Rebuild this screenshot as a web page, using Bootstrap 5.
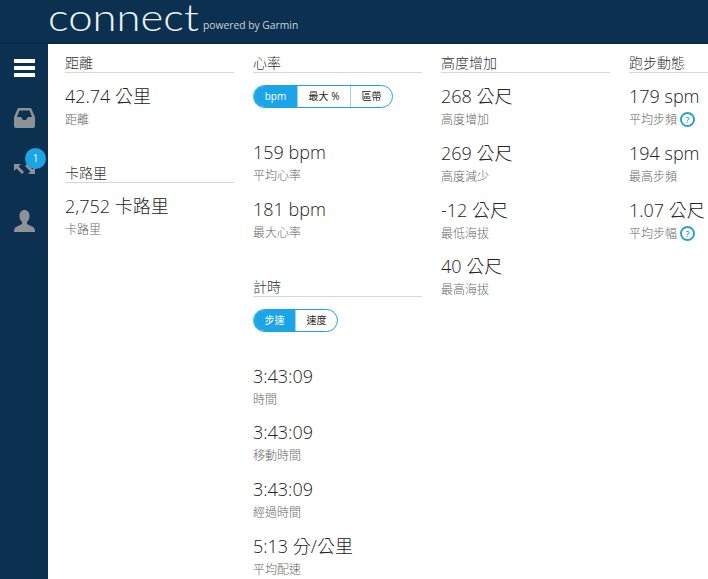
<!DOCTYPE html>
<html lang="zh-Hant">
<head>
  <meta charset="UTF-8">
  <meta name="viewport" content="width=device-width, initial-scale=1">
  <title>Garmin Connect</title>
  <link href="https://cdn.jsdelivr.net/npm/bootstrap@5.3.2/dist/css/bootstrap.min.css" rel="stylesheet">
  <style>
    html, body { height: 100%; overflow: hidden; }
    body { background: #0c3050; font-family: "Open Sans", "Noto Sans CJK TC", sans-serif; color: #222; }
    .top-bar { height: 44px; padding-left: 48px; background: #0c3050; border-bottom: 2px solid #0a2a45; }
    .logo-word { width: 150px; font-family: Lato, "Open Sans", sans-serif; font-weight: 300; font-size: 37px; line-height: 34px; color: #eef5f5; transform: scaleX(1.18); transform-origin: left center; white-space: nowrap; }
    .logo-by { font-size: 10.300px; color: #c9d5dc; margin-left: 5px; margin-top: 18px; line-height: 15px; }
    .shell { height: 535px; }
    .side-rail { width: 48px; flex: none; padding-top: 15px; }
    .rail-item { position: relative; }
    .rail-menu { height: 49px; }
    .rail-inbox { height: 55px; }
    .rail-sync { height: 47px; }
    .rail-item svg { display: block; }
    .rail-badge { position: absolute; left: 25px; top: -15px; width: 21px; height: 21px; border-radius: 50%; background: #1ba5e6; color: #fff; font-size: 10px; line-height: 21px; text-align: center; }
    .page-body { background: #fff; flex: 1; min-width: 0; overflow: hidden; padding: 9px 0 0 17px; gap: 19px; font-weight: 300; }
    .stat-col { width: 169px; flex: none; }
    .sec-title { font-size: 14px; line-height: 19px; height: 19px; border-bottom: 1px solid #d8d8d8; color: #333; box-sizing: content-box; margin: 0; font-weight: 300; }
    .stat-item { height: 56.750px; padding-top: 10px; white-space: nowrap; }
    .stat-val { font-size: 18px; line-height: 26px; color: #222; margin-bottom: 2px; }
    .stat-lab { font-size: 12px; line-height: 18px; color: #666; }
    .pill-group { height: 23px; margin-top: 12px; margin-bottom: 21px; border: 1px solid #1ba5e6; border-radius: 12px; overflow: hidden; font-size: 10px; color: #222; font-weight: 400; }
    .pill-group > div { line-height: 21px; text-align: center; border-left: 1px solid #9fd3ea; }
    .pill-group > .pill-on { background: #1ba5e6; color: #fff; border-left: 0; }
    .pw-43 { width: 43px; }
    .pw-53 { width: 53px; }
    .pw-42 { width: 42px; }
    .pw-41 { width: 41px; }
    .gap-cal { height: 33px; }
    .gap-time { height: 34px; }
    .help-dot { display: inline-block; width: 15px; height: 15px; border: 2px solid #2a9fd0; border-radius: 50%; color: #2a9fd0; font-size: 9px; line-height: 11px; text-align: center; font-weight: 600; margin-left: 3px; vertical-align: 1px; }
  </style>
</head>
<body>
  <div class="top-bar d-flex align-items-start">
    <div class="logo-word">connect</div>
    <div class="logo-by">powered by Garmin</div>
  </div>
  <div class="shell d-flex">
    <div class="side-rail">
      <div class="rail-item rail-menu d-flex justify-content-center">
        <svg width="21" height="18" viewBox="0 0 21 18"><path fill="#fff" d="M0 0h21v4H0zM0 7h21v4H0zM0 14h21v4H0z"/></svg>
      </div>
      <div class="rail-item rail-inbox d-flex justify-content-center">
        <svg width="21" height="20" viewBox="0 0 21 20"><path fill="#8e9296" fill-rule="evenodd" d="M4 0h13l4 9v9a2 2 0 0 1-2 2H2a2 2 0 0 1-2-2V9zM5.500 2.500 3 9h4l2 3h3l2-3h4l-2.500-6.500z"/></svg>
      </div>
      <div class="rail-item rail-sync d-flex justify-content-center">
        <svg width="21" height="12" viewBox="0 0 21 12"><path fill="#8e9296" d="M0 1h7L0 8z"/><path stroke="#8e9296" stroke-width="3" d="M3 4l6 6"/><path fill="#8e9296" d="M21 11h-7l7-7z"/><path stroke="#8e9296" stroke-width="3" d="M18 8l-6-6"/></svg>
        <span class="rail-badge">1</span>
      </div>
      <div class="rail-item d-flex justify-content-center">
        <svg width="21" height="22" viewBox="0 0 21 22"><path fill="#8e9296" d="M10.500 0c3 0 5 2.500 5 6 0 2.500-1 4.500-2.500 6v2l6 3c1.500 1 2 2.500 2 5H0c0-2.500.5-4 2-5l6-3v-2C6.500 10.500 5.500 8.500 5.500 6c0-3.500 2-6 5-6z"/></svg>
      </div>
    </div>
    <div class="page-body d-flex">
      <div class="stat-col">
        <h2 class="sec-title">距離</h2>
        <div class="stat-item"><div class="stat-val">42.74 公里</div><div class="stat-lab">距離</div></div>
        <div class="gap-cal"></div>
        <h2 class="sec-title">卡路里</h2>
        <div class="stat-item"><div class="stat-val">2,752 卡路里</div><div class="stat-lab">卡路里</div></div>
      </div>
      <div class="stat-col">
        <h2 class="sec-title">心率</h2>
        <div class="pill-group d-inline-flex">
          <div class="pill-on pw-43">bpm</div>
          <div class="pw-53">最大 %</div>
          <div class="pw-42">區帶</div>
        </div>
        <div class="stat-item"><div class="stat-val">159 bpm</div><div class="stat-lab">平均心率</div></div>
        <div class="stat-item"><div class="stat-val">181 bpm</div><div class="stat-lab">最大心率</div></div>
        <div class="gap-time"></div>
        <h2 class="sec-title">計時</h2>
        <div class="pill-group d-inline-flex">
          <div class="pill-on pw-41">步速</div>
          <div class="pw-42">速度</div>
        </div>
        <div class="stat-item"><div class="stat-val">3:43:09</div><div class="stat-lab">時間</div></div>
        <div class="stat-item"><div class="stat-val">3:43:09</div><div class="stat-lab">移動時間</div></div>
        <div class="stat-item"><div class="stat-val">3:43:09</div><div class="stat-lab">經過時間</div></div>
        <div class="stat-item"><div class="stat-val">5:13 分/公里</div><div class="stat-lab">平均配速</div></div>
      </div>
      <div class="stat-col">
        <h2 class="sec-title">高度增加</h2>
        <div class="stat-item"><div class="stat-val">268 公尺</div><div class="stat-lab">高度增加</div></div>
        <div class="stat-item"><div class="stat-val">269 公尺</div><div class="stat-lab">高度減少</div></div>
        <div class="stat-item"><div class="stat-val">-12 公尺</div><div class="stat-lab">最低海拔</div></div>
        <div class="stat-item"><div class="stat-val">40 公尺</div><div class="stat-lab">最高海拔</div></div>
      </div>
      <div class="stat-col">
        <h2 class="sec-title">跑步動態</h2>
        <div class="stat-item"><div class="stat-val">179 spm</div><div class="stat-lab">平均步頻<span class="help-dot">?</span></div></div>
        <div class="stat-item"><div class="stat-val">194 spm</div><div class="stat-lab">最高步頻</div></div>
        <div class="stat-item"><div class="stat-val">1.07 公尺</div><div class="stat-lab">平均步幅<span class="help-dot">?</span></div></div>
      </div>
    </div>
  </div>
  <script src="https://cdn.jsdelivr.net/npm/bootstrap@5.3.2/dist/js/bootstrap.bundle.min.js"></script>
</body>
</html>
